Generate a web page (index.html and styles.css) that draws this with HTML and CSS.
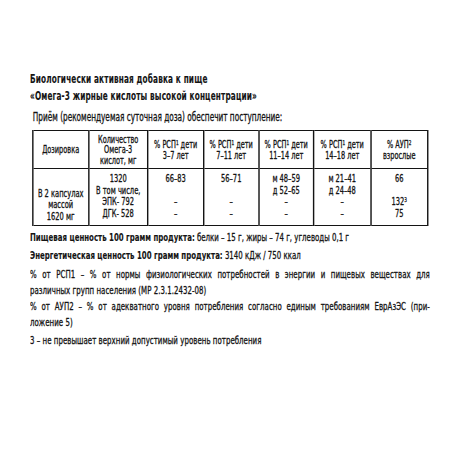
FILE: index.html
```html
<!DOCTYPE html>
<html lang="ru">
<head>
<meta charset="utf-8">
<link rel="stylesheet" href="styles.css">
</head>
<body>
<div class="frame">
<div class="page">
  <h1 class="title">Биологически активная добавка к пище<br>«Омега-3 жирные кислоты высокой концентрации»</h1>
  <p class="intro">Приём (рекомендуемая суточная доза) обеспечит поступление:</p>
  <table class="tbl">
    <colgroup>
      <col class="c1"><col class="c2"><col class="c3"><col class="c4"><col class="c5"><col class="c6"><col class="c7">
    </colgroup>
    <tr class="head">
      <td>Дозировка</td>
      <td>Количество<br>Омега-3<br>кислот, мг</td>
      <td>% РСП<sup>1</sup> дети<br>3–7 лет</td>
      <td>% РСП<sup>1</sup> дети<br>7–11 лет</td>
      <td>% РСП<sup>1</sup> дети<br>11–14 лет</td>
      <td>% РСП<sup>1</sup> дети<br>14–18 лет</td>
      <td>% АУП<sup>2</sup><br>взрослые</td>
    </tr>
    <tr class="body">
      <td class="bot">В 2 капсулах<br>массой<br>1620 мг</td>
      <td>1320<br>В том числе,<br>ЭПК- 792<br>ДГК- 528</td>
      <td>66–83<br><br>–<br>–</td>
      <td>56–71<br><br>–<br>–</td>
      <td>м 48–59<br>д 52–65<br>–<br>–</td>
      <td>м 21–41<br>д 24–48<br>–<br>–</td>
      <td>66<br><br>132<sup>3</sup><br>75</td>
    </tr>
  </table>
  <p class="line"><b>Пищевая ценность 100 грамм продукта:</b> белки – 15 г, жиры – 74 г, углеводы 0,1 г</p>
  <p class="line"><b>Энергетическая ценность 100 грамм продукта:</b> 3140 кДж / 750 ккал</p>
  <p class="note first"><span class="full">% от РСП1 – % от нормы физиологических потребностей в энергии и пищевых веществах для</span>различных групп населения (МР 2.3.1.2432-08)</p>
  <p class="note"><span class="full">% от АУП2 – % от адекватного уровня потребления согласно единым требованиям ЕврАзЭС (при-</span>ложение 5)</p>
  <p class="note last">3 – не превышает верхний допустимый уровень потребления</p>
</div>
</div>
</body>
</html>
```
FILE: styles.css
```css
html, body { margin: 0; padding: 0; background: #fff; }
body { width: 450px; height: 450px; overflow: hidden; }
.frame {
  margin-left: 30px;
  width: 410px;
  height: 450px;
  overflow: hidden;
}
.page {
  padding-top: 71px;
  width: 564px;
  transform: scaleX(0.709);
  transform-origin: left top;
  font-family: "DejaVu Sans Condensed", "DejaVu Sans", sans-serif;
  font-stretch: condensed;
  font-size: 11px;
  color: #141414;
  -webkit-text-stroke: 0.3px #141414;
}
b, .title { -webkit-text-stroke: 0.1px #141414; }
.title {
  margin: 0;
  font-size: 11.5px;
  font-weight: bold;
  line-height: 17px;
  letter-spacing: 0.2px;
}
.intro { margin: 6px 0 6px 4px; line-height: 13px; font-size: 11.5px; }
.tbl {
  border-collapse: collapse;
  margin-left: 2.8px;
  table-layout: fixed;
  width: 557px;
}
.c1 { width: 79px; }
.c2 { width: 83.2px; }
.c3 { width: 79px; }
.c4 { width: 77.6px; }
.c5 { width: 77.6px; }
.c6 { width: 80.4px; }
.c7 { width: 80.4px; }
.tbl td {
  border-style: solid;
  border-color: #141414;
  border-width: 1.6px 2.2px;
  text-align: center;
  padding: 0;
}
.head td { height: 37px; line-height: 10.5px; font-size: 10.3px; vertical-align: middle; }
.body td { height: 52px; line-height: 11.5px; vertical-align: top; padding-top: 4px; font-size: 10.5px; }
.body td.bot { vertical-align: bottom; padding: 0 0 3px; }
sup { font-size: 6.5px; vertical-align: top; position: relative; top: -1px; }
.line { margin: 5px 0 0 0; line-height: 13px; }
.line + .line { margin-top: 5px; }
.note { margin: 0; line-height: 16px; letter-spacing: 0.05px; }
.note.first { margin-top: 5px; }
.note.last { margin-top: 2px; }
.full { display: block; text-align: justify; text-align-last: justify; }
```
